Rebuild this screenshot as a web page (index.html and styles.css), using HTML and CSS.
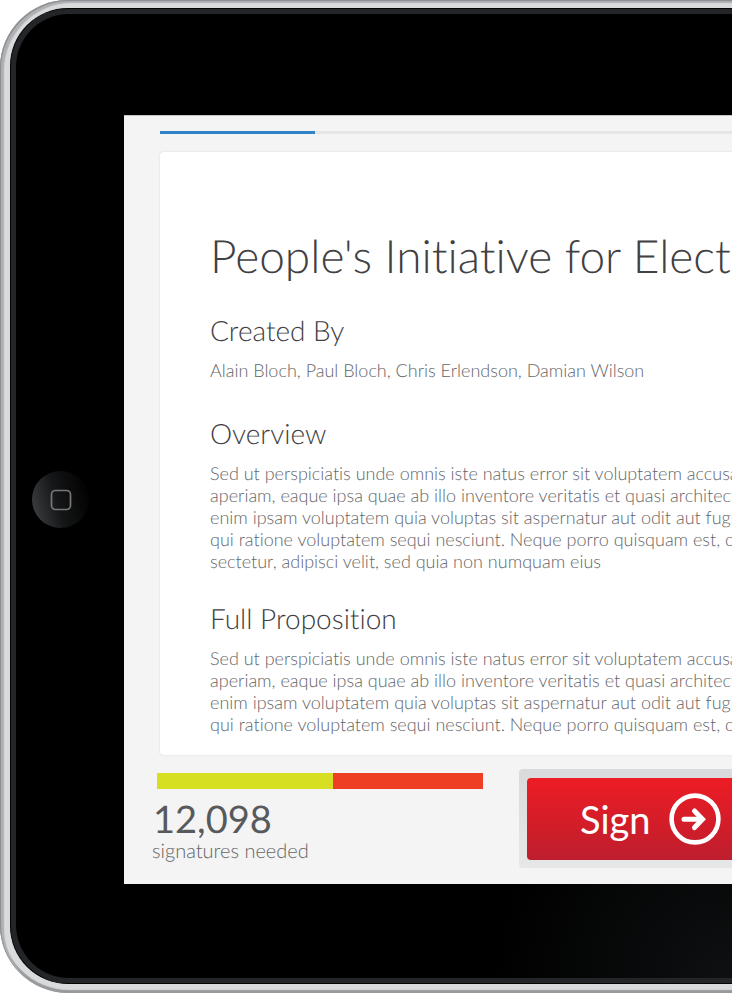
FILE: index.html
```
<!DOCTYPE html>
<html lang="en">
<head>
<meta charset="utf-8">
<title>People's Initiative</title>
<link rel="stylesheet" href="styles.css">
</head>
<body>
<div class="shell">
  <div class="rim">
    <div class="glass">
      <div class="side">
        <button class="home" type="button" aria-label="Home">
          <svg width="22" height="22" viewBox="0 0 22 22" aria-hidden="true"><rect x="1.5" y="1.5" width="19" height="19" rx="4" fill="none" stroke="#77777a" stroke-width="1.7"/></svg>
        </button>
      </div>
      <main class="screen">
        <div class="steps"><div class="steps-done"></div></div>
        <article class="card">
          <h1>People's Initiative for Elections</h1>
          <section class="authors">
            <h2>Created By</h2>
            <p>Alain Bloch, Paul Bloch, Chris Erlendson, Damian Wilson</p>
          </section>
          <section>
            <h2>Overview</h2>
            <p>Sed ut perspiciatis unde omnis iste natus error sit voluptatem accusantium<br>
            aperiam, eaque ipsa quae ab illo inventore veritatis et quasi architecto<br>
            enim ipsam voluptatem quia voluptas sit aspernatur aut odit aut fugit<br>
            qui ratione voluptatem sequi nesciunt. Neque porro quisquam est, qui<br>
            sectetur, adipisci velit, sed quia non numquam eius</p>
          </section>
          <section>
            <h2>Full Proposition</h2>
            <p>Sed ut perspiciatis unde omnis iste natus error sit voluptatem accusantium<br>
            aperiam, eaque ipsa quae ab illo inventore veritatis et quasi architecto<br>
            enim ipsam voluptatem quia voluptas sit aspernatur aut odit aut fugit<br>
            qui ratione voluptatem sequi nesciunt. Neque porro quisquam est, qui</p>
          </section>
        </article>
        <footer class="actions">
          <div class="tally">
            <div class="meter"><div class="meter-signed"></div></div>
            <div class="count">12,098</div>
            <div class="caption">signatures needed</div>
          </div>
          <div class="sign-frame">
            <button class="sign" type="button">
              <span>Sign</span>
              <svg width="52" height="52" viewBox="0 0 52 52" fill="none" stroke="#fff" aria-hidden="true"><circle cx="26" cy="26" r="23.4" stroke-width="4.6"/><path d="M15 26.3H32" stroke-width="5" stroke-linecap="round"/><path d="M25.5 18L33.5 26.3L25.5 34.6" stroke-width="5" stroke-linecap="round" stroke-linejoin="miter"/></svg>
            </button>
          </div>
        </footer>
      </main>
    </div>
  </div>
</div>
</body>
</html>
```
FILE: styles.css
```
* { box-sizing: border-box; }

body {
  margin: 0;
  background: #fff;
  color: #414042;
  font-family: Lato, "Liberation Sans", sans-serif;
  font-variant-ligatures: none;
  text-rendering: geometricPrecision;
  overflow-x: hidden;
}

h1, h2, p { margin: 0; font-weight: 300; white-space: nowrap; }

/* Tablet body: metal shell, dark rim, black glass */
.shell {
  padding: 8px 0 9px 10px;
  border-radius: 68px 0 0 68px;
  background: #d9dadc;
  box-shadow: inset 1px 1px 1px #8a8b8f, inset 4px 3px 1px #b0b1b4, inset 1px -3px 1px #98999c;
}

.rim {
  padding: 5px 0 5px 5px;
  border: 1px solid #050505;
  border-right: 0;
  border-radius: 58px 0 0 58px;
  background: #232528;
}

.glass {
  display: flex;
  padding: 101px 0 94px;
  border-radius: 53px 0 0 53px;
  background: radial-gradient(circle at 100% 100%, #0e1011, #000 240px);
}

.side {
  display: flex;
  flex: 0 0 108px;
  align-items: center;
  padding-left: 16px;
}

.home {
  display: grid;
  place-items: center;
  width: 57px;
  height: 57px;
  padding: 0;
  border: 0;
  border-radius: 50%;
  background: linear-gradient(75deg, #434448, #151617 45%, #000 95%);
}

.screen {
  flex: 1;
  min-width: 0;
  padding: 15px 0 16px 36px;
  border-top: 1px solid #c8c8c8;
  background: #f4f4f4;
  overflow: hidden;
}

.steps { height: 3px; background: #e6e6e6; }
.steps-done { width: 155px; height: 100%; background: #2f83c6; }

.card {
  display: flex;
  flex-direction: column;
  gap: 28px;
  margin-top: 18px;
  padding: 74px 0 20px 50px;
  border-radius: 4px 0 0 4px;
  background: #fff;
  box-shadow: 0 0 2px #d0d0d0;
}

h1 { font-size: 46px; line-height: 60px; margin-bottom: -2px; }
h2 { font-size: 28px; line-height: 36px; margin-bottom: 11px; }
p { color: #636466; font-size: 18px; line-height: 22px; }

.authors { margin-bottom: 6px; }

.actions {
  display: flex;
  gap: 36px;
  align-items: flex-start;
  margin: 14px 0 0 -3px;
}

.tally { flex: 0 0 326px; padding-top: 4px; }
.meter { height: 16px; background: #ee3e24; }
.meter-signed { width: 54%; height: 100%; background: #d7df23; }

.count {
  margin: 8px 0 0 -4px;
  color: #58595b;
  font-size: 38px;
  line-height: 44px;
}

.caption {
  margin-left: -5px;
  color: #636466;
  font-size: 20px;
  font-weight: 300;
  line-height: 20px;
}

.sign-frame {
  flex: 1;
  padding: 9px 0 8px 8px;
  border-radius: 4px 0 0 4px;
  background: linear-gradient(#d9dadb, #e6e7e8);
}

.sign {
  display: flex;
  align-items: center;
  gap: 18px;
  width: 100%;
  height: 82px;
  padding: 0 0 0 53px;
  border: 0;
  border-radius: 4px 0 0 4px;
  background: linear-gradient(#ed1c24, #be1e2d);
  color: #fff;
  font: 400 38px/48px Lato, "Liberation Sans", sans-serif;
}
```
